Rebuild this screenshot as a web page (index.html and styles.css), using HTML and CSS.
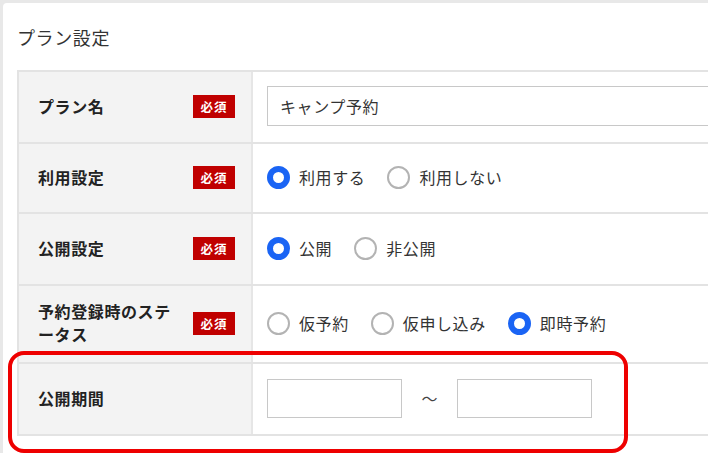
FILE: index.html
```html
<!DOCTYPE html>
<html lang="ja">
<head>
<meta charset="utf-8">
<title>プラン設定</title>
<link rel="stylesheet" href="styles.css">
</head>
<body>
<div class="card">
  <h2 class="title">プラン設定</h2>
  <div class="table">
    <div class="row">
      <div class="label"><span class="label-text">プラン名</span><span class="badge">必須</span></div>
      <div class="value"><div class="text-input wide">キャンプ予約</div></div>
    </div>
    <div class="row row-short">
      <div class="label"><span class="label-text">利用設定</span><span class="badge">必須</span></div>
      <div class="value">
        <label class="radio"><span class="dot on"></span>利用する</label>
        <label class="radio"><span class="dot"></span>利用しない</label>
      </div>
    </div>
    <div class="row">
      <div class="label"><span class="label-text">公開設定</span><span class="badge">必須</span></div>
      <div class="value">
        <label class="radio"><span class="dot on"></span>公開</label>
        <label class="radio"><span class="dot"></span>非公開</label>
      </div>
    </div>
    <div class="row row-tall">
      <div class="label"><span class="label-text">予約登録時のステータス</span><span class="badge">必須</span></div>
      <div class="value">
        <label class="radio"><span class="dot"></span>仮予約</label>
        <label class="radio"><span class="dot"></span>仮申し込み</label>
        <label class="radio"><span class="dot on"></span>即時予約</label>
      </div>
    </div>
    <div class="row highlight-row">
      <div class="label"><span class="label-text">公開期間</span></div>
      <div class="value">
        <div class="text-input small"></div>
        <span class="tilde">～</span>
        <div class="text-input small"></div>
      </div>
      <div class="highlight"></div>
    </div>
  </div>
</div>
</body>
</html>
```

FILE: styles.css
```css
* { box-sizing: border-box; }
html, body { margin: 0; padding: 0; }
body {
  width: 708px;
  height: 453px;
  overflow: hidden;
  background: #e8e8e8;
  padding: 3px 0 0 3px;
  font-family: "Noto Sans CJK JP", "Noto Sans", sans-serif;
  color: #333;
}
.card {
  background: #fff;
  height: 100%;
  border-top-left-radius: 4px;
  padding: 21px 0 0 14px;
}
.title {
  margin: 0 0 20px 0;
  font-size: 18px;
  font-weight: 400;
  line-height: 26px;
  letter-spacing: 0.6px;
  color: #333;
}
.table {
  width: 720px;
  border-top: 2px solid #e3e3e3;
  border-left: 2px solid #e3e3e3;
}
.row {
  position: relative;
  display: grid;
  grid-template-columns: 234px 1fr;
  height: 72px;
  border-bottom: 2px solid #e3e3e3;
}
.row-short { height: 70px; }
.row-tall { height: 78px; }
.label {
  background: #f3f3f3;
  border-right: 2px solid #e6e6e6;
  display: flex;
  align-items: center;
  justify-content: space-between;
  padding: 0 16px 2px 19px;
}
.label-text {
  font-size: 16px;
  font-weight: 700;
  letter-spacing: 0.6px;
  line-height: 23px;
  max-width: 142px;
  color: #222;
}
.badge {
  flex: none;
  width: 42px;
  height: 23px;
  background: #c00000;
  color: #fff;
  font-size: 12.5px;
  font-weight: 700;
  line-height: 23px;
  text-align: center;
  letter-spacing: 1px;
}
.value {
  display: flex;
  align-items: center;
  padding: 0 0 2px 14px;
  font-size: 16px;
  letter-spacing: 0.6px;
}
.text-input {
  border: 1.5px solid #c8c8c8;
  background: #fff;
  height: 40px;
  display: flex;
  align-items: center;
  padding-left: 12px;
  font-size: 16px;
  color: #333;
}
.text-input.wide { width: 460px; }
.text-input.small { width: 135px; height: 39px; }
.tilde {
  width: 55px;
  text-align: center;
  font-size: 16px;
  color: #444;
  letter-spacing: 0;
}
.radio {
  display: flex;
  align-items: center;
  margin-right: 22px;
  color: #333;
}
.dot {
  width: 23px;
  height: 23px;
  border-radius: 50%;
  border: 2px solid #b3b3b3;
  background: #fff;
  margin-right: 9px;
  flex: none;
}
.dot.on {
  border: 6.5px solid #1a64f4;
}
.highlight {
  position: absolute;
  left: -11px;
  top: -13px;
  width: 620px;
  height: 102px;
  border: 4px solid #ee0000;
  border-radius: 16px;
  pointer-events: none;
}
```
